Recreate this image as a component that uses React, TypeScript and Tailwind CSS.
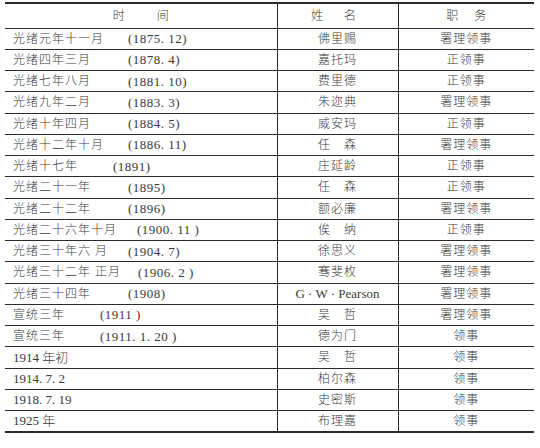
const rows: { period: string; date?: string; pad?: string; name: string; role: string }[] = [
  { period: '光绪元年十一月', date: '(1875. 12)', pad: 'w-[115px]', name: '佛里赐', role: '署理领事' },
  { period: '光绪四年三月', date: '(1878. 4)', pad: 'w-[115px]', name: '嘉托玛', role: '正领事' },
  { period: '光绪七年八月', date: '(1881. 10)', pad: 'w-[115px]', name: '费里德', role: '正领事' },
  { period: '光绪九年二月', date: '(1883. 3)', pad: 'w-[115px]', name: '朱迩典', role: '署理领事' },
  { period: '光绪十年四月', date: '(1884. 5)', pad: 'w-[115px]', name: '威安玛', role: '正领事' },
  { period: '光绪十二年十月', date: '(1886. 11)', pad: 'w-[115px]', name: '任　森', role: '署理领事' },
  { period: '光绪十七年', date: '(1891)', pad: 'w-[100px]', name: '庄延龄', role: '正领事' },
  { period: '光绪二十一年', date: '(1895)', pad: 'w-[115px]', name: '任　森', role: '正领事' },
  { period: '光绪二十二年', date: '(1896)', pad: 'w-[115px]', name: '额必廉', role: '署理领事' },
  { period: '光绪二十六年十月', date: '(1900. 11 )', pad: 'w-[124px]', name: '俟　纳', role: '正领事' },
  { period: '光绪三十年六 月', date: '(1904. 7)', pad: 'w-[115px]', name: '徐思义', role: '署理领事' },
  { period: '光绪三十二年 正月', date: '(1906. 2 )', pad: 'w-[125px]', name: '骞斐枚', role: '署理领事' },
  { period: '光绪三十四年', date: '(1908)', pad: 'w-[115px]', name: 'G · W · Pearson', role: '署理领事' },
  { period: '宣统三年', date: '(1911 )', pad: 'w-[87px]', name: '吴　哲', role: '署理领事' },
  { period: '宣统三年', date: '(1911. 1. 20 )', pad: 'w-[87px]', name: '德为门', role: '领事' },
  { period: '1914 年初', name: '吴　哲', role: '领事' },
  { period: '1914. 7. 2', name: '柏尔森', role: '领事' },
  { period: '1918. 7. 19', name: '史密斯', role: '领事' },
  { period: '1925 年', name: '布理嘉', role: '领事' },
];

export default function App() {
  return (
    <div
      className="w-[540px] h-[448px] bg-white text-[#3a3a3a] text-[12px] leading-none pt-[2px] pl-[5px]"
      style={{ fontFamily: '"Liberation Serif", "Noto Sans CJK SC", serif' }}
    >
      <table className="w-[529px] table-fixed border-collapse border-t-2 border-b-2 border-[#2a2a2a]">
        <colgroup>
          <col className="w-[272px]" />
          <col className="w-[121px]" />
          <col className="w-[136px]" />
        </colgroup>
        <thead>
          <tr className="h-[25px] border-b border-[#2a2a2a]">
            <th className="font-light border-r border-[#2a2a2a]">
              <div className="flex justify-center gap-[32px]">
                <span>时</span>
                <span>间</span>
              </div>
            </th>
            <th className="font-light border-r border-[#2a2a2a]">
              <div className="flex justify-center gap-[21px] pr-[8px]">
                <span>姓</span>
                <span>名</span>
              </div>
            </th>
            <th className="font-light">
              <div className="flex justify-center gap-[16px]">
                <span>职</span>
                <span>务</span>
              </div>
            </th>
          </tr>
        </thead>
        <tbody className="font-light">
          {rows.map((r, i) => (
            <tr key={i} className="h-[21.25px] border-b border-[#2a2a2a]">
              <td className="border-r border-[#2a2a2a] pl-[8px]">
                <div className="flex items-center">
                  {r.date ? (
                    <>
                      <span className={(r.pad ?? '') + ' tracking-[1px] whitespace-pre'}>{r.period}</span>
                      <span className="text-[13px] tracking-[0.5px] whitespace-pre">{r.date}</span>
                    </>
                  ) : (
                    <span className="text-[13px] whitespace-pre">{r.period}</span>
                  )}
                </div>
              </td>
              <td className="border-r border-[#2a2a2a] text-center">
                <span className={r.name.startsWith('G') ? 'text-[13px]' : 'tracking-[1px] whitespace-pre'}>
                  {r.name}
                </span>
              </td>
              <td className="text-center">
                <span className="tracking-[1px]">{r.role}</span>
              </td>
            </tr>
          ))}
        </tbody>
      </table>
    </div>
  );
}
